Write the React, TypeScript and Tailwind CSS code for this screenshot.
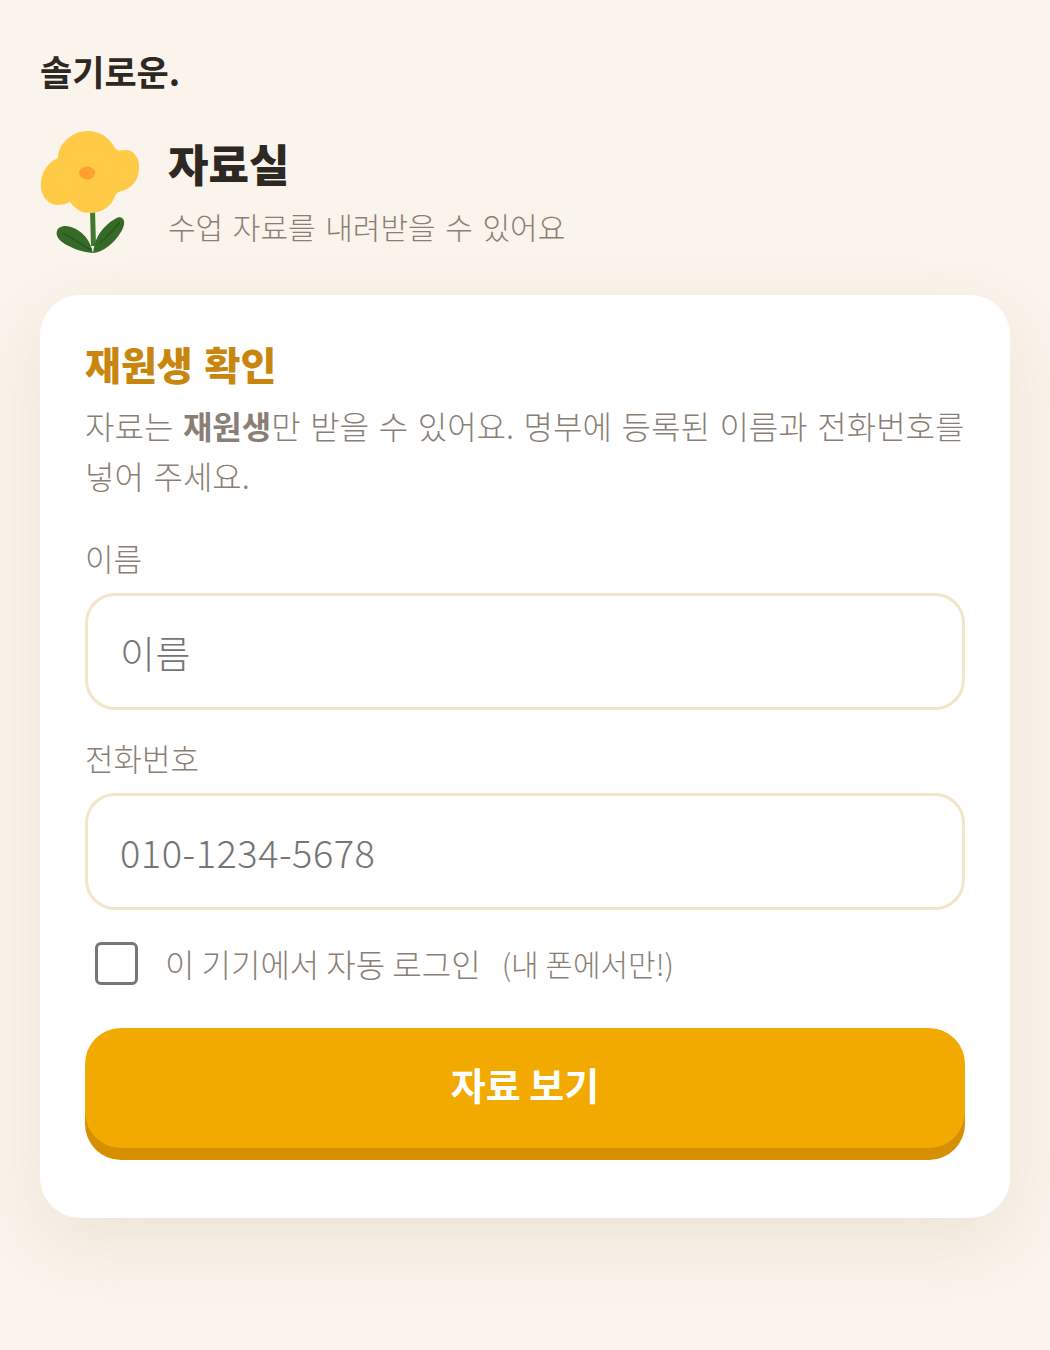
import React from 'react';

const sans = "font-['Noto_Sans_CJK_KR','Noto_Sans',sans-serif]";

function Flower() {
  return (
    <svg width="100" height="126" viewBox="0 0 100 126" className="shrink-0">
      {/* stem */}
      <path d="M52.5 80 L53.5 116" stroke="#3f7a2e" strokeWidth="5" fill="none" />
      {/* leaves */}
      <path d="M53 123 C42 122 30 118 22 112 C16 108 15 101 19 98 C25 94 33 97 39 101 C45 105 50 111 53 123 Z" fill="#356b27" />
      <path d="M53 123 C62 122 70 116 76 109 C81 103 85 96 84 91 C83 87 79 86 75 89 C68 93 62 99 58 106 C55 111 54 117 53 123 Z" fill="#356b27" />
      <path d="M23 103 C32 108 42 115 51 120" stroke="#2a5620" strokeWidth="1.5" fill="none" />
      <path d="M60 113 C66 107 74 100 80 92" stroke="#2a5620" strokeWidth="1.5" fill="none" />
      {/* petals */}
      <path
        d="M48 1 C60 1 70 8 75 18 C78 22 82 20 87 20 C95 21 100 30 99 38 C99 50 92 58 82 61 C78 62 76 63 75 66 C72 76 62 83 50 83 C42 83 36 80 30 72 C24 75 17 76 12 74 C4 70 0 62 1 52 C2 40 10 31 18 28 C18 14 32 1 48 1 Z"
        fill="#ffca45"
      />
      <ellipse cx="47" cy="43" rx="8" ry="6.5" fill="#ffa033" />
    </svg>
  );
}

function Field({ label, placeholder }: { label: string; placeholder: string }) {
  return (
    <div>
      <label className="block text-[31px] leading-[44px] font-light text-[#8a7f76]">{label}</label>
      <input
        placeholder={placeholder}
        className="mt-[13px] block h-[117px] w-full rounded-[30px] border-[3px] border-[#f3e6c8] bg-white px-[32px] text-[38px] tracking-[0.5px] font-light text-[#3a322c] outline-none placeholder:text-[#757575]"
      />
    </div>
  );
}

export default function App() {
  return (
    <div className={`${sans} min-h-[1350px] bg-[#fbf4ec] px-10 pt-[45px]`}>
      <div className="text-[35px] leading-[52px] font-bold text-[#2e2823]">솔기로운.</div>

      <div className="mt-[33px] flex items-start gap-7">
        <Flower />
        <div>
          <h1 className="mt-[2px] text-[44px] leading-[62px] font-black text-[#2e2823]">자료실</h1>
          <p className="mt-[10px] text-[30px] leading-[44px] font-light text-[#8a7f76] [word-spacing:3px]">수업 자료를 내려받을 수 있어요</p>
        </div>
      </div>

      <div className="mt-[39px] rounded-[40px] bg-white px-[45px] pt-[42px] pb-[70px] shadow-[0_24px_70px_rgba(120,80,30,0.1)]">
        <h2 className="text-[39px] leading-[52px] font-black text-[#c9860f] [word-spacing:3px]">재원생 확인</h2>
        <p className="mt-[11px] text-[32px] leading-[50px] font-light text-[#8a7f76] [word-spacing:2.5px]">
          자료는 <strong className="font-bold">재원생</strong>만 받을 수 있어요. 명부에 등록된 이름과 전화번호를 넣어 주세요.
        </p>

        <div className="mt-[36px] flex flex-col gap-[26px]">
          <Field label="이름" placeholder="이름" />
          <Field label="전화번호" placeholder="010-1234-5678" />
        </div>

        <label className="mt-[29px] flex items-center pl-[10px]">
          <input
            type="checkbox"
            className="h-[43px] w-[43px] appearance-none rounded-[6px] border-[3px] border-[#767676] bg-white"
          />
          <span className="ml-[27px] text-[32px] font-light text-[#8a7f76]">이 기기에서 자동 로그인</span>
          <span className="ml-[21px] text-[30px] font-light text-[#8a7f76]">(내 폰에서만!)</span>
        </label>

        <button className="mt-[41px] block h-[120px] w-full rounded-[36px] bg-[#f2aa00] pb-[10px] text-[38px] font-bold text-white shadow-[0_12px_0_#d68f00]">
          자료 보기
        </button>
      </div>
    </div>
  );
}
